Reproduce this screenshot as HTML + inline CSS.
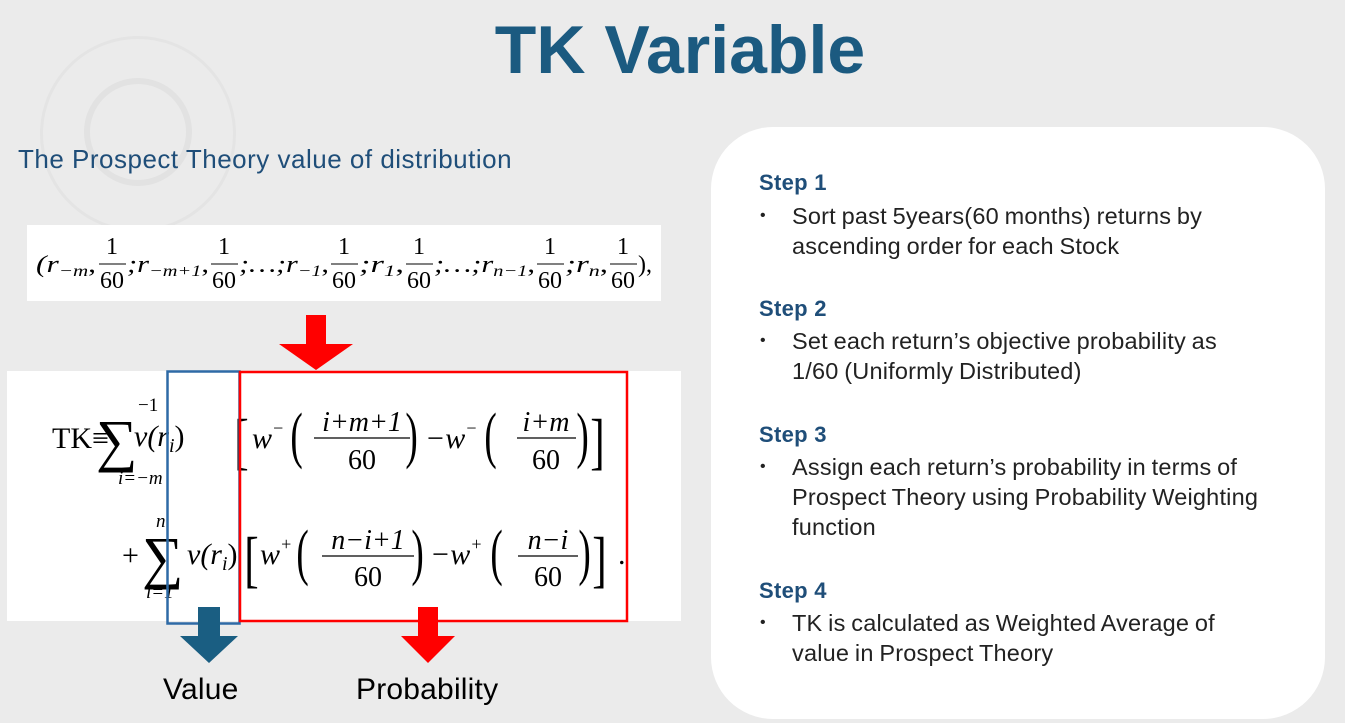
<!DOCTYPE html>
<html><head><meta charset="utf-8"><style>
body{margin:0;width:1345px;height:723px;background:#ebebeb;position:relative;overflow:hidden;font-family:"Liberation Sans",sans-serif}
.a{position:absolute}
.step{color:#1f4e79;font-weight:bold;font-size:22px;letter-spacing:0.3px}
.txt{color:#222;font-size:23.5px;line-height:30px;letter-spacing:0.2px;word-spacing:-1px;white-space:nowrap}
.bul{left:760px;font-size:16px;color:#222}
</style></head><body>
<div class="a" style="left:40px;top:36px;width:190px;height:190px;border-radius:50%;border:3px solid #e4e4e4"></div>
<div class="a" style="left:84px;top:78px;width:96px;height:96px;border-radius:50%;border:6px solid #e2e2e2"></div>
<div class="a" style="left:0;width:1345px;top:10px;text-align:center;padding-left:15px;box-sizing:border-box;font-size:68px;font-weight:bold;color:#1b5a80;line-height:80px">TK Variable</div>
<div class="a" style="left:18px;top:144px;font-size:26px;letter-spacing:0.5px;color:#1f4e79">The Prospect Theory value of distribution</div>

<div class="a" style="left:27px;top:225px;width:634px;height:76px;background:#fff"></div>
<div class="a" style="left:7px;top:371px;width:674px;height:250px;background:#fff"></div>

<svg class="a" style="left:0;top:0" width="700" height="723" font-family="Liberation Serif,serif">
<g font-size="24" fill="#000">
<text x="36" y="272" font-style="italic" textLength="60" lengthAdjust="spacingAndGlyphs">(r<tspan font-size="16" dy="4">−m</tspan><tspan dy="-4" font-style="normal">,</tspan></text>
<text x="127" y="272" font-style="italic" textLength="82" lengthAdjust="spacingAndGlyphs">;r<tspan font-size="16" dy="4">−m+1</tspan><tspan dy="-4" font-style="normal">,</tspan></text>
<text x="239" y="272" font-style="italic" textLength="90" lengthAdjust="spacingAndGlyphs">;…;r<tspan font-size="16" dy="4">−1</tspan><tspan dy="-4" font-style="normal">,</tspan></text>
<text x="359" y="272" font-style="italic" textLength="45" lengthAdjust="spacingAndGlyphs">;r<tspan font-size="16" dy="4">1</tspan><tspan dy="-4" font-style="normal">,</tspan></text>
<text x="434" y="272" font-style="italic" textLength="101" lengthAdjust="spacingAndGlyphs">;…;r<tspan font-size="16" dy="4">n−1</tspan><tspan dy="-4" font-style="normal">,</tspan></text>
<text x="565" y="272" font-style="italic" textLength="43" lengthAdjust="spacingAndGlyphs">;r<tspan font-size="16" dy="4">n</tspan><tspan dy="-4" font-style="normal">,</tspan></text>
<text x="638" y="272">),</text>
<g text-anchor="middle">
<text x="112" y="254">1</text><text x="112" y="288">60</text>
<text x="224" y="254">1</text><text x="224" y="288">60</text>
<text x="344" y="254">1</text><text x="344" y="288">60</text>
<text x="419" y="254">1</text><text x="419" y="288">60</text>
<text x="550" y="254">1</text><text x="550" y="288">60</text>
<text x="623" y="254">1</text><text x="623" y="288">60</text>
</g>
<g stroke="#000" stroke-width="1"><line x1="99" x2="126" y1="264" y2="264"/><line x1="211" x2="238" y1="264" y2="264"/><line x1="331" x2="358" y1="264" y2="264"/><line x1="406" x2="433" y1="264" y2="264"/><line x1="537" x2="564" y1="264" y2="264"/><line x1="610" x2="637" y1="264" y2="264"/></g>
</g>
<g fill="#000">
<text x="52" y="448" font-size="30">TK≡</text>
<text x="96" y="460" font-size="58">∑</text>
<text x="138" y="411" font-size="19">−1</text>
<text x="118" y="484" font-size="19" font-style="italic">i=−m</text>
<text x="134" y="446" font-size="30" font-style="italic">v(r<tspan font-size="20" dy="6">i</tspan><tspan dy="-6" font-style="normal">)</tspan></text>
<text x="234" y="462" font-size="62" transform="translate(235,462) scale(0.7,1) translate(-235,-462)">[</text>
<text x="252" y="448" font-size="30" font-style="italic">w<tspan font-size="18" dy="-14">−</tspan></text>
<text x="290" y="456" font-size="62" transform="translate(291,456) scale(0.6,1) translate(-291,-456)">(</text>
<text x="362" y="431" font-size="28" font-style="italic" text-anchor="middle">i+m+1</text>
<line x1="314" x2="410" y1="438" y2="438" stroke="#000" stroke-width="1.2"/>
<text x="362" y="469" font-size="28" text-anchor="middle">60</text>
<text x="405" y="456" font-size="62" transform="translate(406,456) scale(0.6,1) translate(-406,-456)">)</text>
<text x="425" y="448" font-size="30" font-style="italic">−w<tspan font-size="18" dy="-14">−</tspan></text>
<text x="484" y="456" font-size="62" transform="translate(485,456) scale(0.6,1) translate(-485,-456)">(</text>
<text x="546" y="431" font-size="28" font-style="italic" text-anchor="middle">i+m</text>
<line x1="517" x2="576" y1="438" y2="438" stroke="#000" stroke-width="1.2"/>
<text x="546" y="469" font-size="28" text-anchor="middle">60</text>
<text x="576" y="456" font-size="62" transform="translate(577,456) scale(0.6,1) translate(-577,-456)">)</text>
<text x="590" y="462" font-size="62" transform="translate(591,462) scale(0.7,1) translate(-591,-462)">]</text>

<text x="122" y="565" font-size="30">+</text>
<text x="142" y="577" font-size="58">∑</text>
<text x="156" y="527" font-size="19" font-style="italic">n</text>
<text x="146" y="598" font-size="19" font-style="italic">i=1</text>
<text x="187" y="564" font-size="30" font-style="italic">v(r<tspan font-size="20" dy="6">i</tspan><tspan dy="-6" font-style="normal">)</tspan></text>
<text x="244" y="580" font-size="62" transform="translate(245,580) scale(0.7,1) translate(-245,-580)">[</text>
<text x="260" y="564" font-size="30" font-style="italic">w<tspan font-size="18" dy="-14">+</tspan></text>
<text x="296" y="573" font-size="62" transform="translate(297,573) scale(0.6,1) translate(-297,-573)">(</text>
<text x="368" y="549" font-size="28" font-style="italic" text-anchor="middle">n−i+1</text>
<line x1="322" x2="414" y1="556" y2="556" stroke="#000" stroke-width="1.2"/>
<text x="368" y="586" font-size="28" text-anchor="middle">60</text>
<text x="411" y="573" font-size="62" transform="translate(412,573) scale(0.6,1) translate(-412,-573)">)</text>
<text x="430" y="564" font-size="30" font-style="italic">−w<tspan font-size="18" dy="-14">+</tspan></text>
<text x="490" y="573" font-size="62" transform="translate(491,573) scale(0.6,1) translate(-491,-573)">(</text>
<text x="548" y="549" font-size="28" font-style="italic" text-anchor="middle">n−i</text>
<line x1="518" x2="578" y1="556" y2="556" stroke="#000" stroke-width="1.2"/>
<text x="548" y="586" font-size="28" text-anchor="middle">60</text>
<text x="578" y="573" font-size="62" transform="translate(579,573) scale(0.6,1) translate(-579,-573)">)</text>
<text x="592" y="580" font-size="62" transform="translate(593,580) scale(0.7,1) translate(-593,-580)">]</text>
<text x="618" y="564" font-size="30">.</text>
</g>
<path d="M306 315h20v29h27l-37 26l-37-26h27z" fill="#ff0000"/>
<rect x="167.5" y="371.5" width="72" height="252" fill="none" stroke="#2e6aa6" stroke-width="2.5"/>
<rect x="240" y="372" width="387" height="249" fill="none" stroke="#ff0000" stroke-width="2.5"/>
<path d="M198 607h22v29h18l-29 27l-29-27h18z" fill="#1a5e82"/>
<path d="M418 607h20v29h17l-27 27l-27-27h17z" fill="#ff0000"/>
</svg>
<div class="a" style="left:163px;top:673px;font-size:30px;letter-spacing:0.2px;color:#000">Value</div>
<div class="a" style="left:356px;top:673px;font-size:30px;letter-spacing:0.2px;color:#000">Probability</div>

<div class="a" style="left:711px;top:127px;width:614px;height:592px;background:#fff;border-radius:62px"></div>
<div class="a step" style="left:759px;top:170px">Step 1</div>
<div class="a bul" style="top:207px">•</div>
<div class="a txt" style="left:792px;top:201px">Sort past 5years(60 months) returns by<br>ascending order for each Stock</div>
<div class="a step" style="left:759px;top:296px">Step 2</div>
<div class="a bul" style="top:332px">•</div>
<div class="a txt" style="left:792px;top:326px">Set each return’s objective probability as<br>1/60 (Uniformly Distributed)</div>
<div class="a step" style="left:759px;top:422px">Step 3</div>
<div class="a bul" style="top:458px">•</div>
<div class="a txt" style="left:792px;top:452px">Assign each return’s probability in terms of<br>Prospect Theory using Probability Weighting<br>function</div>
<div class="a step" style="left:759px;top:578px">Step 4</div>
<div class="a bul" style="top:614px">•</div>
<div class="a txt" style="left:792px;top:608px">TK is calculated as Weighted Average of<br>value in Prospect Theory</div>
</body></html>
